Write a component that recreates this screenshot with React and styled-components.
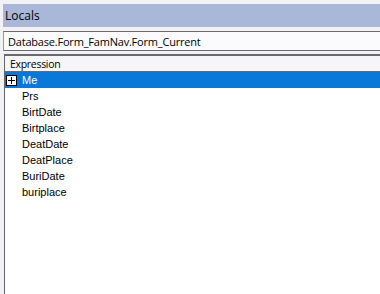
import React from "react";
import styled, { createGlobalStyle } from "styled-components";

const Global = createGlobalStyle`
  html, body { margin: 0; padding: 0; background: #f2f2f4; }
  #root { width: 380px; height: 294px; overflow: hidden; }
`;

const Window = styled.div`
  width: 380px;
  height: 294px;
  padding: 4px 0 0 3px;
  box-sizing: border-box;
  display: flex;
  flex-direction: column;
  background: #f2f2f4;
  font-family: "Liberation Sans", Arial, sans-serif;
`;

const TitleBar = styled.div`
  height: 23px;
  display: flex;
  align-items: center;
  padding-left: 2px;
  background: #a9b8d8;
  color: #000;
  font-family: "Open Sans", "Liberation Sans", sans-serif;
  font-size: 12px;
  flex-shrink: 0;
`;

const PathBox = styled.div`
  margin-top: 4px;
  height: 18px;
  display: flex;
  align-items: center;
  padding-left: 4px;
  background: #fbfbfd;
  border-top: 1px solid #6a6a6e;
  border-bottom: 1px solid #6a6a6e;
  border-left: 1px solid #9a9a9e;
  font-family: "Open Sans", "Liberation Sans", sans-serif;
  font-size: 11px;
  letter-spacing: -0.2px;
  color: #000;
  flex-shrink: 0;
`;

const Grid = styled.div`
  margin-top: 3px;
  margin-left: 1px;
  flex: 1;
  display: flex;
  flex-direction: column;
  background: #fff;
  border-top: 2px solid #6a6a6e;
  border-left: 1px solid #6a6470;
`;

const Header = styled.div`
  height: 15px;
  display: flex;
  align-items: center;
  padding-left: 5px;
  background: #f6f6f8;
  border-bottom: 1px solid #6a6a6e;
  font-family: "Open Sans", "Liberation Sans", sans-serif;
  font-size: 10.5px;
  letter-spacing: -0.3px;
  color: #000;
`;

const Row = styled.div`
  height: 16px;
  display: flex;
  align-items: center;
  gap: 5px;
  padding-left: ${({ $expandable }) => ($expandable ? "1px" : "17px")};
  background: ${({ $selected }) => ($selected ? "#0a78d8" : "transparent")};
  color: ${({ $selected }) => ($selected ? "#fff" : "#000")};
  font-size: 11px;
`;

const Expander = styled.span`
  width: 9px;
  height: 9px;
  border: 1px solid #000;
  background: #fff;
  display: flex;
  align-items: center;
  justify-content: center;
`;

const PlusIcon = () => (
  <svg width="7" height="7" viewBox="0 0 7 7">
    <path d="M0 3.5H7M3.5 0V7" stroke="#000" strokeWidth="1" />
  </svg>
);

const items = ["Prs", "BirtDate", "Birtplace", "DeatDate", "DeatPlace", "BuriDate", "buriplace"];

export default function App() {
  return (
    <>
      <Global />
      <Window>
        <TitleBar>Locals</TitleBar>
        <PathBox>Database.Form_FamNav.Form_Current</PathBox>
        <Grid>
          <Header>Expression</Header>
          <Row $selected $expandable>
            <Expander>
              <PlusIcon />
            </Expander>
            Me
          </Row>
          {items.map((name) => (
            <Row key={name}>{name}</Row>
          ))}
        </Grid>
      </Window>
    </>
  );
}
